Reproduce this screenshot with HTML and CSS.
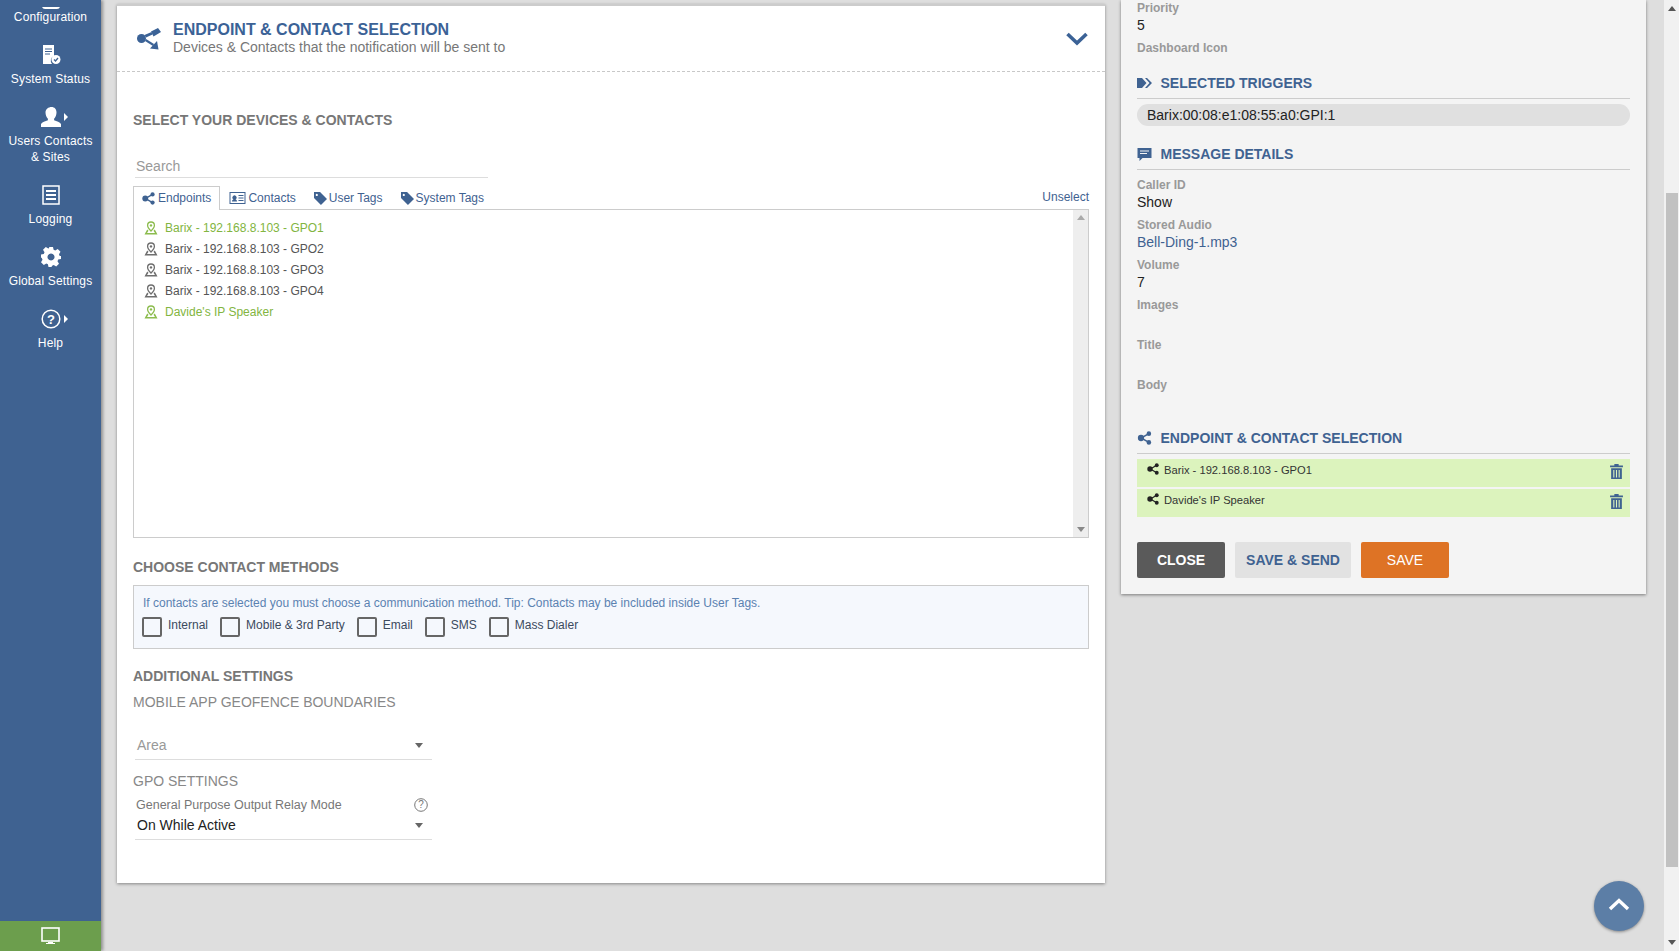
FILE: index.html
```html
<!DOCTYPE html>
<html lang="en">
<head>
<meta charset="utf-8">
<title>Endpoint &amp; Contact Selection</title>
<link rel="stylesheet" href="styles.css">
</head>
<body>
<svg class="defs" width="0" height="0" aria-hidden="true">
  <symbol id="share" viewBox="0 0 24 24">
    <circle cx="4.500" cy="11.500" r="4.500"/>
    <path d="M14 4.500 21 1 24 5 16.500 9.500z"/>
    <path d="M7.500 8 14.500 5 15.500 7.500 9 10.500z"/>
    <path d="M8 14 9 12 17 17 16 19z"/>
    <path d="M13 21.500 21.500 22.500 20 14z"/>
  </symbol>
  <symbol id="share-small" viewBox="0 0 16 16">
    <circle cx="4" cy="8" r="3.600"/>
    <circle cx="13" cy="3" r="2.600"/>
    <circle cx="13" cy="13" r="2.600"/>
    <path d="M4 7.200 12.600 2.200 13.400 3.800 6 8 13.400 12.200 12.600 13.800 4 8.800z"/>
  </symbol>
  <symbol id="pin" viewBox="0 0 14 14">
    <path fill="none" stroke="currentColor" stroke-width="1.300" d="M7 1a3.400 3.400 0 0 1 3.400 3.400C10.400 6.600 7 10 7 10S3.600 6.600 3.600 4.400A3.400 3.400 0 0 1 7 1z"/>
    <circle cx="7" cy="4.400" r="1.200" fill="currentColor"/>
    <path fill="currentColor" d="M3.200 8.500 4.500 9.700 3 12h8L9.500 9.700 10.800 8.500 13.500 13.500H.500z"/>
  </symbol>
  <symbol id="trash" viewBox="0 0 12 14">
    <path d="M4 0h4v1.500h4V3H0V1.500h4z"/>
    <path d="M1 4h10v10H1zM3 5.500v7h1v-7zM5.500 5.500v7h1v-7zM8 5.500v7h1v-7z" fill-rule="evenodd"/>
  </symbol>
  <symbol id="tag" viewBox="0 0 14 14">
    <path d="M0 0h6.500L14 7.500 7.500 14 0 6.500zM3 2a1.200 1.200 0 1 0 .01 0z" fill-rule="evenodd"/>
  </symbol>
</svg>
<div class="app">
  <nav class="sidebar">
    <ul class="nav">
      <li class="nav-item nav-first">
        <span class="nav-clip">
          <svg class="nav-icon" width="18" height="20" viewBox="0 0 18 20"><rect x="1" y="1" width="16" height="18" rx="2" fill="none" stroke="#fff" stroke-width="2"/></svg>
        </span>
        <span>Configuration</span>
      </li>
      <li class="nav-item">
        <svg class="nav-icon" width="20" height="20" viewBox="0 0 20 20">
          <path fill="#fff" d="M2 0h11v11a5 5 0 0 0-2 8H2z"/>
          <path stroke="#3f6291" stroke-width="1" d="M4 4h7M4 6.500h7M4 9h5"/>
          <circle cx="15" cy="14.500" r="4.500" fill="#fff"/>
          <path fill="none" stroke="#3f6291" stroke-width="1.300" d="M13 14.500l1.500 1.500 2.500-3"/>
        </svg>
        <span>System Status</span>
      </li>
      <li class="nav-item">
        <svg class="nav-icon nav-arrowed" width="20" height="20" viewBox="0 0 20 20">
          <path fill="#fff" d="M10.500 0c3 0 5 2.200 5 5.500 0 2.500-1 5-2.400 6.200v1.500c2.500 1 5.900 2 6.900 3.800V20H0v-3c1-1.800 4.400-2.800 6.900-3.800v-1.500C5.500 10.500 4.500 8 4.500 5.500 4.500 2.200 7.500 0 10.500 0z"/>
          <path fill="#fff" d="M23 6l4 4-4 4z"/>
        </svg>
        <span>Users Contacts<br>&amp; Sites</span>
      </li>
      <li class="nav-item">
        <svg class="nav-icon" width="18" height="20" viewBox="0 0 18 20">
          <rect x="1" y="1" width="16" height="18" fill="none" stroke="#fff" stroke-width="1.500"/>
          <path stroke="#fff" stroke-width="2" d="M4 6h10M4 10h10M4 14h10"/>
        </svg>
        <span>Logging</span>
      </li>
      <li class="nav-item">
        <svg class="nav-icon" width="20" height="20" viewBox="0 0 20 20">
          <path fill="#fff" fill-rule="evenodd" d="M8 0h4l.6 2.800 1.600.7 2.500-1.500 2.800 2.800-1.500 2.500.7 1.600L20 9v3l-2.800.6-.7 1.600 1.500 2.500-2.800 2.800-2.500-1.500-1.600.7L10.500 20h-3l-.6-2.800-1.600-.7-2.500 1.500L0 15.200l1.500-2.500-.7-1.600L0 10.500v-3l2.800-.6.700-1.600L2 2.800 4.800 0l2.500 1.500 1-.4zM10 6.500a3.500 3.500 0 1 0 .01 0z"/>
        </svg>
        <span>Global Settings</span>
      </li>
      <li class="nav-item">
        <svg class="nav-icon nav-arrowed" width="20" height="20" viewBox="0 0 20 20">
          <circle cx="10" cy="10" r="8.800" fill="none" stroke="#fff" stroke-width="1.500"/>
          <text x="10" y="14.500" class="help-q">?</text>
          <path fill="#fff" d="M23 6l4 4-4 4z"/>
        </svg>
        <span>Help</span>
      </li>
    </ul>
    <div class="screen-btn">
      <svg width="20" height="18" viewBox="0 0 20 18"><rect x="1" y="1" width="17" height="13" fill="none" stroke="#fff" stroke-width="1.600"/><path fill="#fff" d="M7 15h5v1h2v1H5v-1h2z"/></svg>
    </div>
  </nav>

  <div class="content">
    <main class="card">
      <header class="card-head">
        <svg class="head-icon" width="24" height="24"><use href="#share"/></svg>
        <div class="head-text">
          <h1>ENDPOINT &amp; CONTACT SELECTION</h1>
          <p>Devices &amp; Contacts that the notification will be sent to</p>
        </div>
        <svg class="head-chevron" width="22" height="14" viewBox="0 0 22 14"><path fill="none" stroke="#3b6296" stroke-width="3.600" d="M1.500 2 11 11 20.500 2"/></svg>
      </header>
      <div class="card-body">
        <h2 class="section first-section">SELECT YOUR DEVICES &amp; CONTACTS</h2>
        <div class="search">Search</div>
        <div class="tabs">
          <span class="tab active"><svg width="13" height="13"><use href="#share-small"/></svg>Endpoints</span>
          <span class="tab"><svg width="17" height="12" viewBox="0 0 16 12"><path fill-rule="evenodd" d="M0 0h16v12H0zM1 1v10h14V1zM2.500 9.500c0-1.500 1-2 1.500-2.300a2 2 0 1 1 2 0c.5.300 1.500.8 1.500 2.300zM9 3h5v1H9zM9 5.500h5v1H9zM9 8h5v1H9z"/></svg>Contacts</span>
          <span class="tab"><svg width="13" height="13"><use href="#tag"/></svg>User Tags</span>
          <span class="tab"><svg width="13" height="13"><use href="#tag"/></svg>System Tags</span>
          <a class="unselect">Unselect</a>
        </div>
        <div class="list-box">
          <ul class="list">
            <li class="on"><svg width="14" height="14"><use href="#pin"/></svg>Barix - 192.168.8.103 - GPO1</li>
            <li><svg width="14" height="14"><use href="#pin"/></svg>Barix - 192.168.8.103 - GPO2</li>
            <li><svg width="14" height="14"><use href="#pin"/></svg>Barix - 192.168.8.103 - GPO3</li>
            <li><svg width="14" height="14"><use href="#pin"/></svg>Barix - 192.168.8.103 - GPO4</li>
            <li class="on"><svg width="14" height="14"><use href="#pin"/></svg>Davide's IP Speaker</li>
          </ul>
          <div class="list-scroll"><span class="arrow-up"></span><span class="arrow-down"></span></div>
        </div>
        <h2 class="section methods-title">CHOOSE CONTACT METHODS</h2>
        <div class="methods">
          <p>If contacts are selected you must choose a communication method. Tip: Contacts may be included inside User Tags.</p>
          <div class="checks">
            <label class="check"><span class="box"></span>Internal</label>
            <label class="check"><span class="box"></span>Mobile &amp; 3rd Party</label>
            <label class="check"><span class="box"></span>Email</label>
            <label class="check"><span class="box"></span>SMS</label>
            <label class="check"><span class="box"></span>Mass Dialer</label>
          </div>
        </div>
        <h2 class="section additional-title">ADDITIONAL SETTINGS</h2>
        <h3 class="sub geo">MOBILE APP GEOFENCE BOUNDARIES</h3>
        <div class="select select-area"><span>Area</span><i class="caret caret-area"></i></div>
        <h3 class="sub gpo">GPO SETTINGS</h3>
        <div class="relay-label"><span>General Purpose Output Relay Mode</span>
          <svg width="14" height="14" viewBox="0 0 14 14"><circle cx="7" cy="7" r="6.300" fill="none" stroke="#777" stroke-width="1"/><text x="7" y="10.300" class="q-small">?</text></svg>
        </div>
        <div class="select select-relay"><span>On While Active</span><i class="caret caret-relay"></i></div>
      </div>
    </main>

    <aside class="panel">
      <div class="field"><label>Priority</label><div class="val">5</div></div>
      <div class="field"><label>Dashboard Icon</label></div>
      <h2 class="panel-title triggers"><svg width="15" height="12" viewBox="0 0 15 12"><path d="M0 1h5l4.500 5L5 11H0zM8 1h2l5 5-5 5H8l4.500-5z"/></svg>SELECTED TRIGGERS</h2>
      <div class="pill">Barix:00:08:e1:08:55:a0:GPI:1</div>
      <h2 class="panel-title details"><svg width="15" height="14" viewBox="0 0 14 14"><path fill-rule="evenodd" d="M0 1h14v10H5l-3 3v-3H0zM2.500 3.500v1h9v-1zM2.500 6v1h7V6z"/></svg>MESSAGE DETAILS</h2>
      <div class="field"><label>Caller ID</label><div class="val">Show</div></div>
      <div class="field"><label>Stored Audio</label><div class="val link">Bell-Ding-1.mp3</div></div>
      <div class="field"><label>Volume</label><div class="val">7</div></div>
      <div class="field"><label>Images</label><div class="val"></div></div>
      <div class="field"><label>Title</label><div class="val"></div></div>
      <div class="field"><label>Body</label><div class="val"></div></div>
      <h2 class="panel-title endpoints"><svg width="15" height="14"><use href="#share-small"/></svg>ENDPOINT &amp; CONTACT SELECTION</h2>
      <div class="row"><svg class="row-share" width="12" height="12"><use href="#share-small"/></svg><span>Barix - 192.168.8.103 - GPO1</span><svg class="row-trash" width="13" height="15"><use href="#trash"/></svg></div>
      <div class="row"><svg class="row-share" width="12" height="12"><use href="#share-small"/></svg><span>Davide's IP Speaker</span><svg class="row-trash" width="13" height="15"><use href="#trash"/></svg></div>
      <div class="actions">
        <button class="btn btn-close">CLOSE</button>
        <button class="btn btn-send">SAVE &amp; SEND</button>
        <button class="btn btn-save">SAVE</button>
      </div>
    </aside>
  </div>

  <div class="scrollbar">
    <span class="sb-up"></span>
    <span class="sb-track"><span class="sb-thumb"></span></span>
    <span class="sb-down"></span>
  </div>

  <button class="to-top" aria-label="Back to top">
    <svg width="22" height="14" viewBox="0 0 22 14"><path fill="none" stroke="#fff" stroke-width="3.400" d="M2 12 11 3.500 20 12"/></svg>
  </button>
</div>
</body>
</html>
```
FILE: styles.css
```css
* { box-sizing: border-box; }
html, body { margin: 0; padding: 0; height: 100%; overflow: hidden; }
body { font-family: "Liberation Sans", Arial, sans-serif; background: #dedede; color: #333; }
.defs { position: absolute; }
h1, h2, h3, p, ul { margin: 0; padding: 0; }
ul { list-style: none; }
.app { display: flex; height: 951px; position: relative; overflow: hidden; }

/* Sidebar */
.sidebar { width: 101px; flex: none; background: #3f6291; box-shadow: 2px 0 3px rgba(0,0,0,.35); display: flex; flex-direction: column; justify-content: space-between; position: relative; z-index: 2; color: #fff; }
.nav-item { display: flex; flex-direction: column; align-items: center; text-align: center; font-size: 12px; line-height: 16px; height: 62px; letter-spacing: .15px; }
.nav-item.nav-first { height: 25px; justify-content: flex-end; }
.nav-item:nth-child(3) { height: 78px; }
.nav-clip { height: 2px; overflow: hidden; display: block; }
.nav-icon { display: block; margin: 20px 0 6px; flex: none; }
.nav-clip .nav-icon { margin: -18px 0 0; }
.nav-arrowed { overflow: visible; }
.help-q { font: bold 13px "Liberation Sans", sans-serif; fill: #fff; text-anchor: middle; }
.screen-btn { height: 30px; background: #6c9e4d; display: flex; align-items: center; justify-content: center; }
.screen-btn svg { display: block; }

/* Content area */
.content { flex: 1; display: flex; align-items: flex-start; gap: 16px; padding: 4px 0 0 16px; }
.card { width: 988px; height: 879px; background: #fff; border-top: 2px solid #ccc; box-shadow: 0 1px 3px rgba(0,0,0,.4); flex: none; }
.card-head { height: 66px; border-bottom: 1px dashed #c8c8c8; display: flex; align-items: flex-start; padding: 21px 17px 0 20px; }
.head-icon { fill: #3b6296; flex: none; margin: 0 12px 0 0; }
.head-text { flex: 1; margin-top: -7px; }
.head-text h1 { font-size: 16px; line-height: 19px; font-weight: bold; color: #3b6296; }
.head-text p { font-size: 14px; line-height: 16px; color: #777; }
.head-chevron { margin-top: 5px; }
.card-body { padding: 0 16px; }
.section { font-size: 14px; font-weight: bold; color: #777; line-height: 18px; }
.first-section { margin-top: 39px; }
.search { margin: 27px 0 0 2px; width: 353px; height: 22px; border-bottom: 1px solid #ddd; font-size: 14px; line-height: 20px; color: #999; padding-left: 1px; }
.tabs { display: flex; align-items: flex-end; margin-top: 8px; height: 24px; border-bottom: 1px solid #ccc; font-size: 12px; color: #3f6291; }
.tab { display: flex; align-items: center; gap: 2px; height: 24px; padding: 2px 9px 0; white-space: nowrap; }
.tab svg { fill: #3f6291; flex: none; }
.tab.active { background: #fff; border: 1px solid #ccc; border-bottom: 0; height: 24px; margin-bottom: -1px; padding: 0 8px 1px 8px; gap: 3px; }
.unselect { margin-left: auto; align-self: center; color: #3f6291; font-size: 12px; line-height: 16px; margin-top: -1px; }
.list-box { display: flex; height: 328px; border: 1px solid #ccc; border-top: 0; }
.list { flex: 1; padding: 7px 0 0 10px; font-size: 12px; color: #555; }
.list li { display: flex; align-items: center; gap: 7px; height: 21px; }
.list li svg { color: #6e6e6e; }
.list li.on { color: #82b541; }
.list li.on svg { color: #8cbc4e; }
.list-scroll { width: 15px; background: #eee; display: flex; flex-direction: column; justify-content: space-between; align-items: center; padding: 5px 0; }
.arrow-up { border: 4px solid transparent; border-top: 0; border-bottom: 5px solid #aaa; }
.arrow-down { border: 4px solid transparent; border-bottom: 0; border-top: 5px solid #888; }
.methods-title { margin-top: 20px; }
.methods { margin-top: 9px; height: 64px; border: 1px solid #ccc; background: #f5f8fd; padding: 10px 8px 0 8px; }
.methods p { font-size: 12px; line-height: 15px; color: #5b82b1; padding-left: 1px; }
.checks { display: flex; margin-top: 6px; font-size: 12px; color: #3b4a5e; }
.check { display: flex; align-items: flex-start; line-height: 16px; margin-right: 12px; }
.box { width: 20px; height: 20px; border: 2px solid #666; border-radius: 2px; margin-right: 6px; background: transparent; }
.additional-title { margin-top: 18px; }
.sub { font-size: 14px; font-weight: normal; color: #888; line-height: 18px; }
.geo { margin-top: 8px; }
.gpo { margin-top: 12px; }
.select { width: 297px; margin-left: 2px; border-bottom: 1px solid #ddd; display: flex; align-items: flex-start; justify-content: space-between; font-size: 14px; padding: 0 9px 0 2px; }
.select-area { margin-top: 25px; height: 24px; color: #999; line-height: 18px; }
.select-relay { height: 27px; color: #222; line-height: 24px; }
.caret { border: 4px solid transparent; border-bottom: 0; border-top: 5px solid #666; }
.caret-area { margin-top: 7px; }
.caret-relay { margin-top: 10px; }
.relay-label { width: 297px; margin: 7px 0 0 3px; display: flex; justify-content: space-between; align-items: center; font-size: 12.500px; line-height: 16px; color: #777; padding-right: 5px; }
.relay-label svg { display: block; }
.q-small { font: 10px "Liberation Sans", sans-serif; fill: #777; text-anchor: middle; }

/* Right panel */
.panel { width: 525px; height: 594px; margin-top: -4px; flex: none; background: #f4f4f4; box-shadow: 0 1px 3px rgba(0,0,0,.45); padding: 0 16px; }
.field { height: 40px; }
.field label { display: block; font-size: 12px; line-height: 16px; font-weight: bold; color: #999; }
.val { font-size: 14px; line-height: 18px; color: #222; }
.link { color: #3f6291; }
.panel-title { display: flex; align-items: center; gap: 8.500px; font-size: 14px; font-weight: bold; color: #3f6291; line-height: 18px; border-bottom: 1px solid #ccc; padding-bottom: 6px; }
.panel-title svg { fill: #3f6291; flex: none; }
.triggers { margin-top: -6px; }
.details { margin-top: 19px; }
.details + .field { margin-top: 7px; }
.endpoints { margin-top: 12px; }
.pill { margin-top: 5px; height: 22px; background: #e0e0e0; border-radius: 11px; padding: 0 10px; font-size: 14px; line-height: 22px; color: #222; }
.row { display: flex; align-items: flex-start; height: 28px; margin-top: 2px; background: #dcf3bd; padding: 4px 7px 0 10px; font-size: 11.200px; line-height: 15px; color: #333; }
.endpoints + .row { margin-top: 5px; }
.row span { flex: 1; margin-left: 5px; }
.row-share { fill: #222; }
.row-trash { fill: #3f6291; margin-top: 1px; }
.actions { display: flex; gap: 10px; margin-top: 25px; }
.btn { height: 36px; border: 0; border-radius: 2px; font: bold 14px "Liberation Sans", sans-serif; padding: 0; }
.btn-close { width: 88px; background: #5a5a5a; color: #fff; }
.btn-send { width: 116px; background: #e2e2e2; color: #3f6291; }
.btn-save { width: 88px; background: #de7325; color: #fff; font-weight: normal; }

/* Page scrollbar */
.scrollbar { width: 15px; flex: none; background: #f1f1f1; display: flex; flex-direction: column; align-items: center; }
.sb-up { margin-top: 6px; border: 4px solid transparent; border-top: 0; border-bottom: 5px solid #555; }
.sb-track { flex: 1; width: 100%; display: flex; flex-direction: column; justify-content: flex-end; padding: 0 1px 0 2px; }
.sb-thumb { display: block; height: 674px; background: #c1c1c1; margin-bottom: 73px; }
.sb-down { margin-bottom: 6px; border: 4px solid transparent; border-bottom: 0; border-top: 5px solid #555; }
.to-top { position: absolute; left: 1594px; top: 881px; width: 50px; height: 50px; border: 0; border-radius: 50%; background: #5c7ea6; box-shadow: 0 1px 3px rgba(0,0,0,.4); display: flex; align-items: center; justify-content: center; padding: 0 0 5px; z-index: 3; }
```
